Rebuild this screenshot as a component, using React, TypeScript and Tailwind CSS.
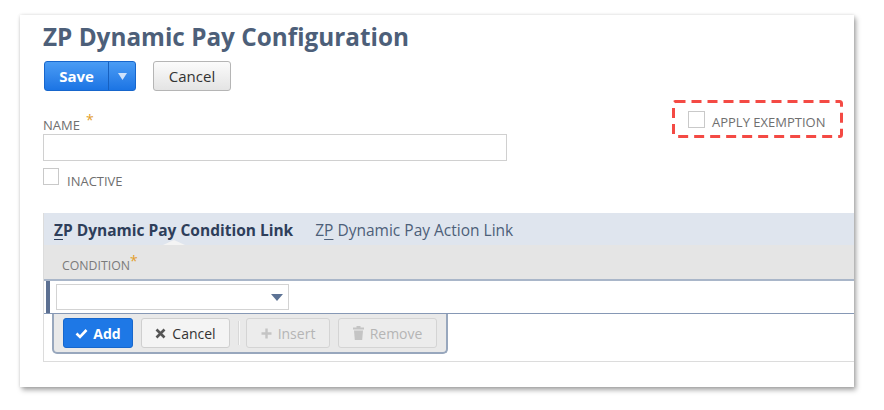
import React from "react";

function Star() {
  return <span className="text-[#e39e2c] text-[14px] leading-none relative top-[-3px]">*</span>;
}

function Check() {
  return (
    <svg width="13" height="11" viewBox="0 0 13 11" className="inline-block">
      <path d="M1.5 5.5 L5 9 L11.5 2" fill="none" stroke="white" strokeWidth="2.6" />
    </svg>
  );
}

function XIcon() {
  return (
    <svg width="11" height="11" viewBox="0 0 11 11" className="inline-block">
      <path d="M1.5 1.5 L9.5 9.5 M9.5 1.5 L1.5 9.5" fill="none" stroke="#555" strokeWidth="2.6" />
    </svg>
  );
}

function PlusIcon() {
  return (
    <svg width="11" height="11" viewBox="0 0 11 11" className="inline-block">
      <path d="M5.5 0.5 V10.5 M0.5 5.5 H10.5" fill="none" stroke="#c4c4c4" strokeWidth="2.4" />
    </svg>
  );
}

function TrashIcon() {
  return (
    <svg width="11" height="14" viewBox="0 0 11 14" className="inline-block">
      <rect x="0" y="1.5" width="11" height="2" fill="#c4c4c4" />
      <rect x="3.5" y="0" width="4" height="2" fill="#c4c4c4" />
      <path d="M1 4.5 H10 L9.2 14 H1.8 Z" fill="#c4c4c4" />
    </svg>
  );
}

export default function App() {
  return (
    <div className="w-[884px] h-[410px] bg-white pt-[15px] pl-[20px] font-['Open_Sans',sans-serif]">
      <div className="w-[834px] h-[372px] bg-white overflow-hidden pl-[23px] pt-[6px] shadow-[2px_3px_5px_rgba(0,0,0,0.35),0_0_3px_rgba(0,0,0,0.12)]">
        <div className="text-[24.3px] leading-[32px] font-bold text-[#4d5f79] whitespace-nowrap">
          ZP Dynamic Pay Configuration
        </div>
        <div className="flex mt-[8px] h-[30px] pl-[1px]">
          <div className="flex h-[30px] rounded-[3px] border border-[#1766cc] bg-gradient-to-b from-[#4a9cf4] to-[#1b74e4] overflow-hidden">
            <div className="w-[63px] flex items-center justify-center text-white font-bold text-[15px]">Save</div>
            <div className="w-[27px] flex items-center justify-center border-l border-[#1760bf]">
              <svg width="9" height="7" viewBox="0 0 9 7">
                <path d="M0 0 H9 L4.5 7 Z" fill="#cfe2fb" />
              </svg>
            </div>
          </div>
          <div className="ml-[17px] w-[78px] h-[30px] rounded-[3px] border border-[#b5b5b5] bg-gradient-to-b from-[#fbfbfb] to-[#e4e4e4] flex items-center justify-center text-[15px] text-[#333]">
            Cancel
          </div>
        </div>

        <div className="flex items-start mt-[9px]">
          <div className="w-[464px]">
            <div className="pt-[16px] h-[34px] text-[13px] leading-[18px] text-[#6f6f6f] flex items-start gap-[6px]">
              <span>NAME</span>
              <Star />
            </div>
            <div className="h-[27px] border border-[#d0d0d0] bg-white"></div>
            <div className="flex items-center mt-[6px] h-[18px]">
              <div className="w-[16px] h-[17px] border border-[#c9c9c9] bg-white"></div>
              <span className="ml-[8px] text-[13px] text-[#6f6f6f] relative top-[6px]">INACTIVE</span>
            </div>
          </div>
          <div className="ml-[165px] w-[171px] h-[38px] relative flex items-center pl-[16px]">
            <svg className="absolute inset-0" width="171" height="38" viewBox="0 0 171 38">
              <rect x="1.5" y="1.5" width="168" height="35" rx="2" fill="none" stroke="#f44a44" strokeWidth="3" strokeDasharray="10 6" />
            </svg>
            <div className="w-[17px] h-[17px] border border-[#c9c9c9] bg-white"></div>
            <span className="ml-[7px] text-[13px] text-[#6f6f6f] relative top-[4px]">APPLY EXEMPTION</span>
          </div>
        </div>

        <div className="mt-[28px] w-[860px] border-l border-b border-[#dcdcdc] h-[149px]">
          <div className="h-[32px] bg-[#dfe5ee] flex items-center relative">
            <div className="pl-[10px] text-[15.5px] font-bold text-[#2e3e5a] whitespace-nowrap relative top-[2px]">
              <span className="underline underline-offset-[3px]">Z</span>P Dynamic Pay Condition Link
            </div>
            <div className="pl-[22px] text-[15.5px] text-[#4d5f79] whitespace-nowrap relative top-[2px]">
              Z<span className="underline underline-offset-[3px]">P</span> Dynamic Pay Action Link
            </div>
            <svg className="absolute left-[119px] bottom-0" width="22" height="5" viewBox="0 0 22 5">
              <path d="M0 5 L11 0 L22 5 Z" fill="#f4f4f4" />
            </svg>
          </div>
          <div className="h-[36px] bg-[#e5e5e5] border-b-2 border-[#a9b6c9] flex items-center pl-[18px]">
            <div className="relative top-[4px] flex items-start">
              <span className="text-[12.3px] text-[#7a7a7a]">CONDITION</span>
              <Star />
            </div>
          </div>
          <div className="h-[33px] border-b border-[#8698b5] flex items-center relative">
            <div className="w-[4px] h-full bg-[#5c7092] ml-[2px]"></div>
            <div className="ml-[6px] w-[233px] h-[26px] border border-[#d3d3d3] bg-white flex items-center justify-end pr-[5px]">
              <svg width="12" height="7" viewBox="0 0 12 7">
                <path d="M0 0 H12 L6 7 Z" fill="#5d7395" />
              </svg>
            </div>
          </div>
          <div className="ml-[8px] w-[396px] h-[40px] bg-[#e9e9e9] border-l-2 border-r-2 border-b-2 border-[#98a7bd] rounded-b-[5px] flex items-center pl-[9px] gap-[8px]">
            <div className="w-[70px] h-[30px] rounded-[3px] bg-[#1e78e6] border border-[#1767cc] flex items-center justify-center gap-[5px] text-white font-bold text-[14px]">
              <Check />
              <span>Add</span>
            </div>
            <div className="w-[89px] h-[30px] rounded-[3px] bg-[#f4f4f4] border border-[#cfcfcf] flex items-center justify-center gap-[6px] text-[#333] text-[14px]">
              <XIcon />
              <span>Cancel</span>
            </div>
            <div className="w-[2px] h-[24px] -mr-[2px] bg-[#f7f7f7] border-l border-[#d8d8d8]"></div>
            <div className="w-[84px] h-[30px] rounded-[3px] bg-[#ececec] border border-[#d4d4d4] flex items-center justify-center gap-[6px] text-[#b5b5b5] text-[14px]">
              <PlusIcon />
              <span>Insert</span>
            </div>
            <div className="w-[99px] h-[30px] rounded-[3px] bg-[#ececec] border border-[#d4d4d4] flex items-center justify-center gap-[6px] text-[#b5b5b5] text-[14px]">
              <TrashIcon />
              <span>Remove</span>
            </div>
          </div>
        </div>
      </div>
    </div>
  );
}
